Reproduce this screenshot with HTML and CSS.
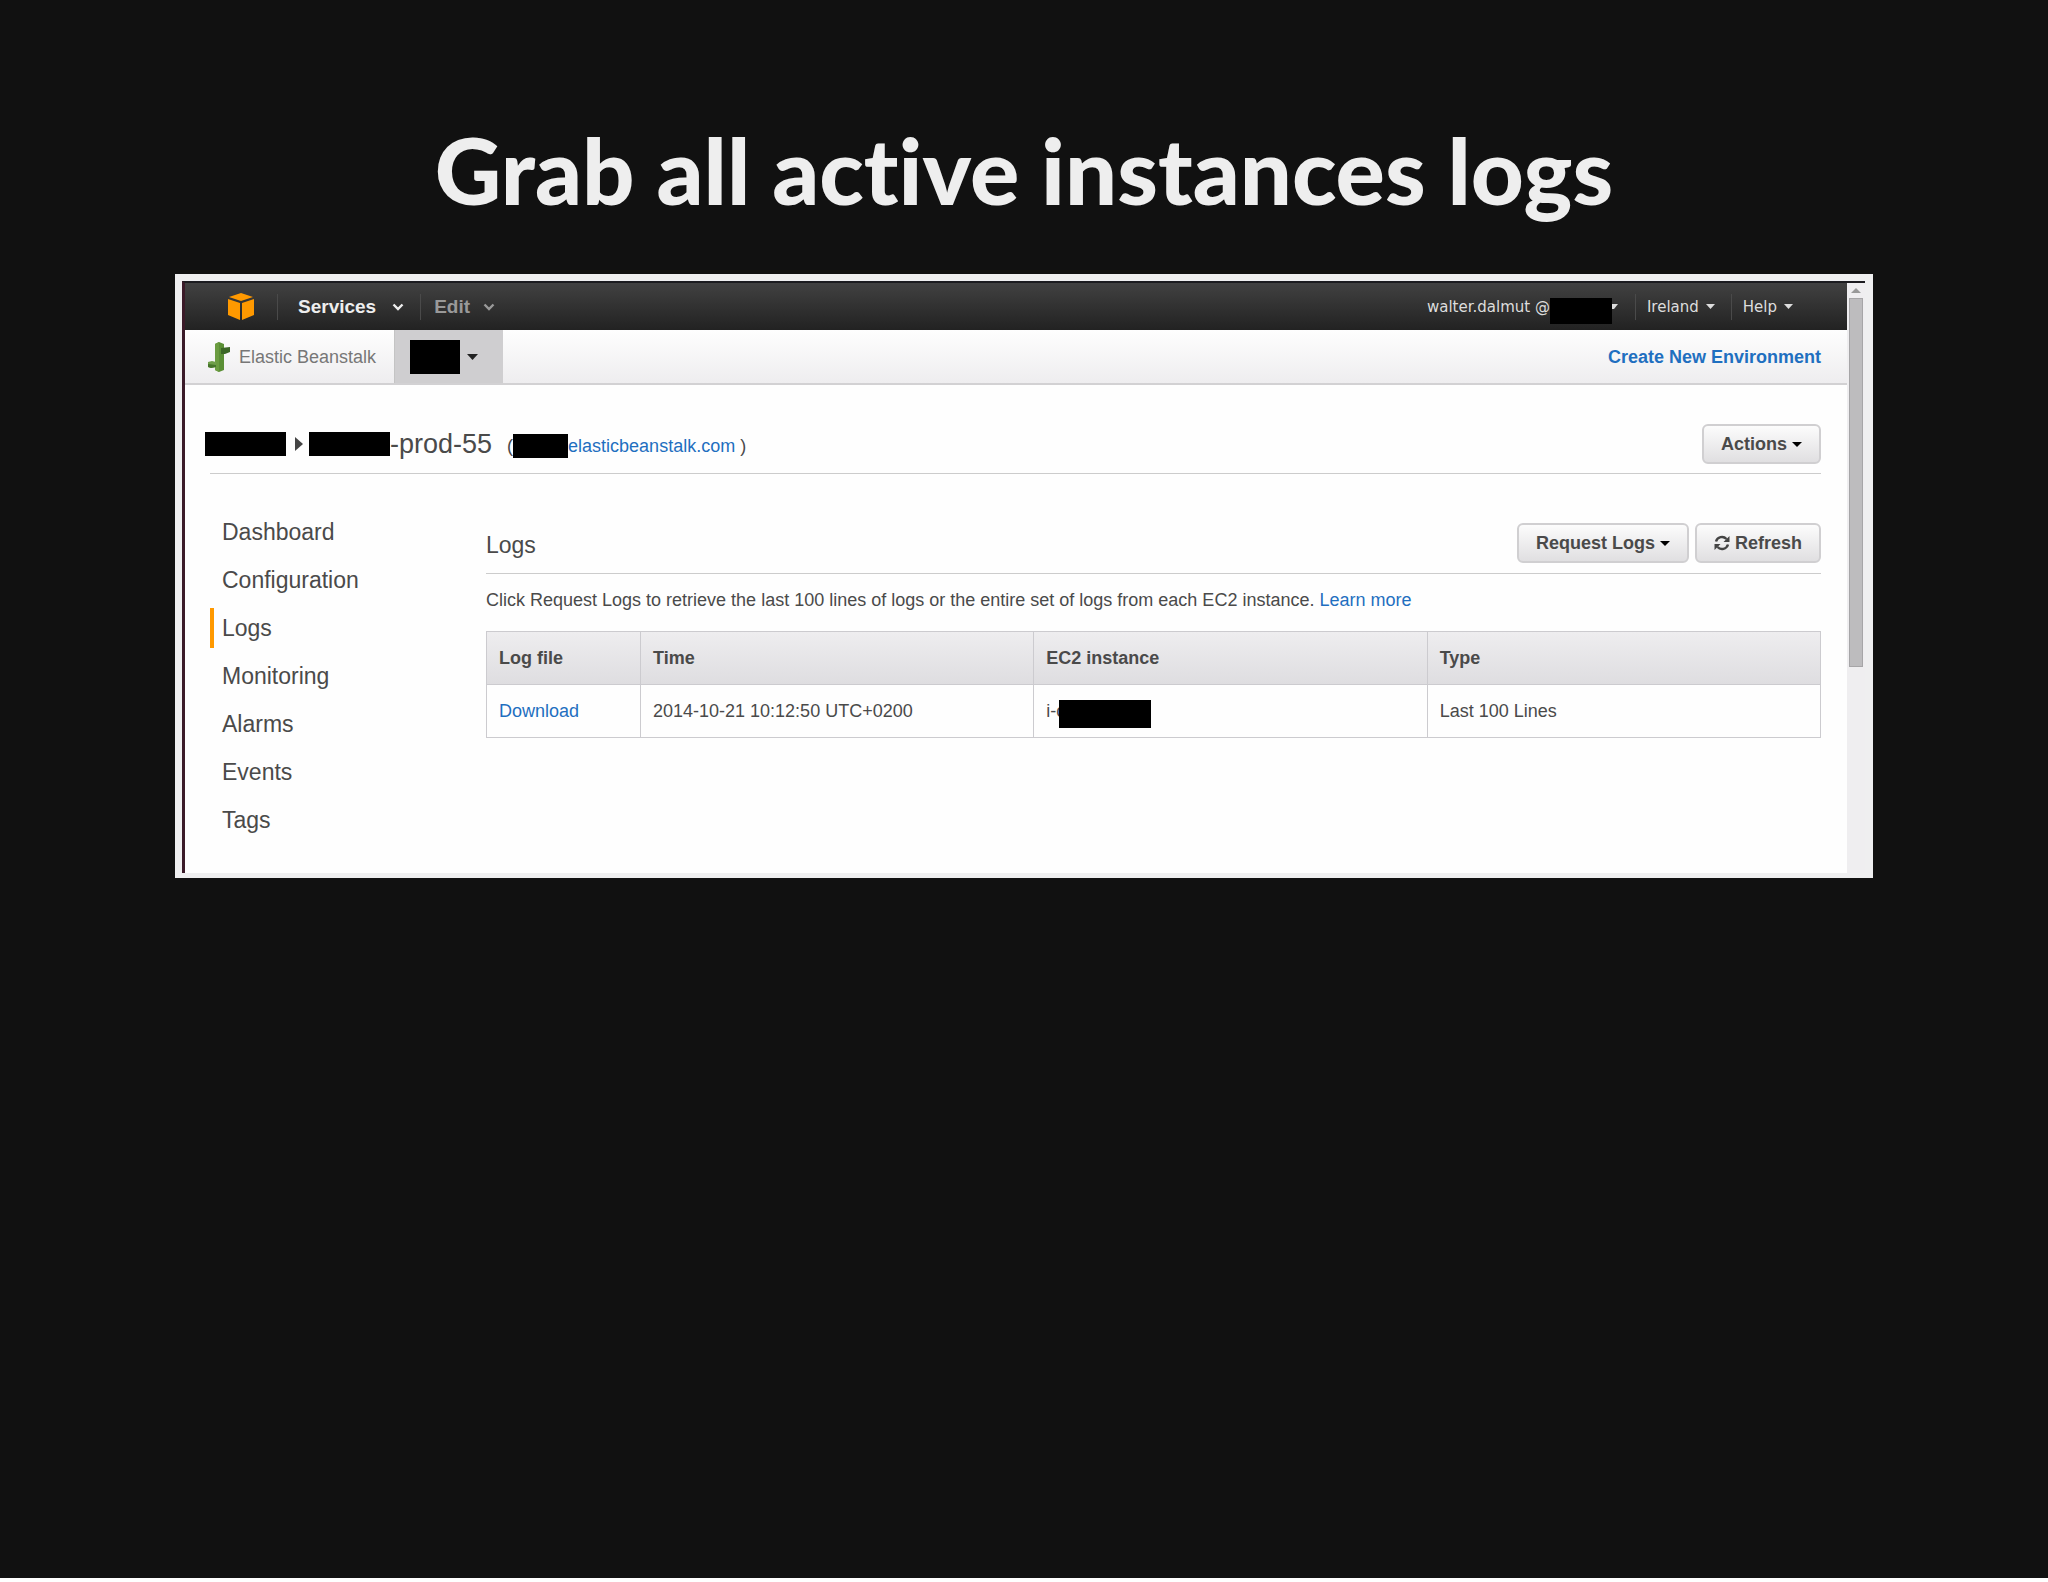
FILE: index.html
```html
<!DOCTYPE html>
<html lang="en">
<head>
<meta charset="utf-8">
<title>Grab all active instances logs</title>
<link rel="stylesheet" href="styles.css">
</head>
<body>
<main class="slide">
  <h1 class="slide-title">Grab all active instances logs</h1>
  <section class="frame" aria-label="Elastic Beanstalk console">
    <div class="console">
      <nav class="topbar">
        <a class="home" href="#" aria-label="Console home">
          <svg width="28" height="28" viewBox="0 0 28 28" fill="#f90"><path d="M14 0 26 4 14 8 2 4zM1 6l12 4v17L1 22zM27 6 15 10v17l12-5z"/></svg>
        </a>
        <button class="menu menu-services">Services <svg width="12" height="8" viewBox="0 0 12 8"><path d="M1.500 1.500 6 6l4.500-4.500" fill="none" stroke="currentColor" stroke-width="2.400"/></svg></button>
        <button class="menu menu-edit">Edit <svg width="12" height="8" viewBox="0 0 12 8"><path d="M1.500 1.500 6 6l4.500-4.500" fill="none" stroke="currentColor" stroke-width="2.400"/></svg></button>
        <div class="account">
          <button class="menu menu-user">walter.dalmut @<span class="redacted redacted-user"></span><svg width="6" height="6" viewBox="0 0 6 6"><path d="M0 0h6L2 5H0z" fill="currentColor"/></svg></button>
          <button class="menu menu-small">Ireland <svg width="9" height="6" viewBox="0 0 9 6"><path d="M0 0h9L4.500 5z" fill="currentColor"/></svg></button>
          <button class="menu menu-small">Help <svg width="9" height="6" viewBox="0 0 9 6"><path d="M0 0h9L4.500 5z" fill="currentColor"/></svg></button>
        </div>
      </nav>
      <div class="servicebar">
        <a class="service" href="#">
          <svg width="22" height="30" viewBox="0 0 22 30"><path d="M7 2l4-2 5 2v26l-5 2-4-2z" fill="#5a8f35"/><path d="M7 2l4-2v30l-4-2z" fill="#6b9c41"/><path d="M13 6l9-1v5l-5 2h-4z" fill="#3c6727"/><path d="M0 20l4-1 4 1v5l-5 1-3-1z" fill="#6f9f4a"/><path d="M0 22l8 1v2l-5 1-3-1z" fill="#46752b"/></svg>
          Elastic Beanstalk
        </a>
        <button class="app-tab" aria-label="Application"><span class="redacted redacted-app"></span><svg width="11" height="6" viewBox="0 0 11 6"><path d="M0 0h11L5.500 6z" fill="#222"/></svg></button>
        <a class="create" href="#">Create New Environment</a>
      </div>
      <div class="content">
        <header class="env-head">
          <h2 class="env-name"><span class="redacted redacted-name"></span><svg class="crumb" width="8" height="14" viewBox="0 0 8 14"><path d="M0 0l8 7-8 7z" fill="#444"/></svg><span class="redacted redacted-name"></span>-prod-55</h2>
          <p class="env-url">(<span class="redacted redacted-url"></span><a href="#">elasticbeanstalk.com</a> )</p>
          <button class="btn">Actions <svg width="10" height="5" viewBox="0 0 10 5"><path d="M0 0h10L5 5z"/></svg></button>
        </header>
        <div class="columns">
          <ul class="sidenav">
            <li><a href="#">Dashboard</a></li>
            <li><a href="#">Configuration</a></li>
            <li><a class="current" href="#">Logs</a></li>
            <li><a href="#">Monitoring</a></li>
            <li><a href="#">Alarms</a></li>
            <li><a href="#">Events</a></li>
            <li><a href="#">Tags</a></li>
          </ul>
          <section class="logs">
            <header class="logs-head">
              <h3>Logs</h3>
              <button class="btn">Request Logs <svg width="10" height="5" viewBox="0 0 10 5"><path d="M0 0h10L5 5z"/></svg></button>
              <button class="btn"><svg width="16" height="16" viewBox="0 0 16 16"><path d="M2 6.500A6.200 6.200 0 0 1 12.500 4M14 9.500A6.200 6.200 0 0 1 3.500 12" fill="none" stroke="#444" stroke-width="2.400"/><path d="M15.500 1v6h-6zM.5 15V9h6z" fill="#444"/></svg> Refresh</button>
            </header>
            <p class="hint">Click Request Logs to retrieve the last 100 lines of logs or the entire set of logs from each EC2 instance. <a href="#">Learn more</a></p>
            <table class="log-table">
              <colgroup><col class="col-file"><col><col><col></colgroup>
              <thead><tr><th>Log file</th><th>Time</th><th>EC2 instance</th><th>Type</th></tr></thead>
              <tbody><tr><td><a href="#">Download</a></td><td>2014-10-21 10:12:50 UTC+0200</td><td><span class="instance">i-c<span class="redacted redacted-id"></span></span></td><td>Last 100 Lines</td></tr></tbody>
            </table>
          </section>
        </div>
      </div>
    </div>
    <div class="scrollbar" aria-hidden="true">
      <svg class="scroll-up" width="10" height="5" viewBox="0 0 10 5"><path d="M0 5h10L5 0z" fill="#999"/></svg>
      <div class="thumb"></div>
    </div>
  </section>
</main>
</body>
</html>
```
FILE: styles.css
```css
* { box-sizing: border-box; }

body {
  margin: 0;
  background: #111;
  color: #4a4a4a;
  font: 18px/24px "Liberation Sans", Arial, sans-serif;
}

h1, h2, h3, p, ul { margin: 0; padding: 0; font-weight: normal; }
ul { list-style: none; }
a { color: #1f6fc0; text-decoration: none; }
button { font: inherit; color: inherit; margin: 0; padding: 0; border: 0; background: none; white-space: nowrap; }
svg { display: block; flex: none; }

.slide {
  min-height: 100vh;
  padding: 118px 175px 0;
  border-bottom: 4px solid #fff;
}

.slide-title {
  margin-bottom: 52px;
  color: #eee;
  font: 900 92px/104px Lato, "Open Sans", sans-serif;
  font-variant-ligatures: none;
  text-align: center;
}

.frame {
  display: flex;
  border: solid #efeff0;
  border-width: 7px 8px 5px 7px;
  background: #efeef0;
}

.console {
  flex: 1;
  min-width: 0;
  border-top: 2px solid #1c1c20;
  border-left: 3px solid #3a1a28;
  background: #fefefe;
}

.redacted { display: inline-block; flex: none; background: #000; }

/* Top navigation */
.topbar {
  display: flex;
  align-items: center;
  height: 47px;
  padding: 0 40px 0 42px;
  background: linear-gradient(#414141, #222);
  color: #eee;
}
.menu {
  display: flex;
  align-items: center;
  height: 26px;
  border-left: 1px solid #4a4a4a;
}
.home { margin-right: 22px; }
.menu-services, .menu-edit { font-size: 19px; font-weight: bold; }
.menu-services { gap: 16px; padding: 0 16px 0 20px; }
.menu-edit { gap: 13px; padding-left: 13px; color: #999; }
.account {
  display: flex;
  margin-left: auto;
  font: 15px/24px "DejaVu Sans", sans-serif;
  color: #ddd;
}
.menu-small { gap: 7px; padding: 0 16px 0 11px; }
.menu-small:last-child { padding-right: 14px; }
.menu-user { padding-right: 17px; border: 0; }
.redacted-user { width: 62px; height: 26px; margin-top: 8px; }

/* Service bar */
.servicebar {
  display: flex;
  height: 55px;
  padding-right: 26px;
  border-bottom: 2px solid #d2d1d3;
  background: linear-gradient(#fefefe, #eeedef);
}
.service {
  display: flex;
  align-items: center;
  gap: 9px;
  padding: 0 18px 0 23px;
  color: #777;
}
.app-tab {
  display: flex;
  align-items: center;
  gap: 7px;
  padding: 0 25px 0 15px;
  border-left: 1px solid #c4c4c4;
  background: #cfced0;
}
.redacted-app { width: 50px; height: 34px; }
.create { margin: auto 0 auto auto; font-weight: bold; }

/* Environment header */
.content { padding: 39px 26px 33px 25px; }
.env-head {
  display: flex;
  align-items: center;
  height: 50px;
  padding-bottom: 9px;
  border-bottom: 1px solid #ccc;
}
.env-name {
  display: flex;
  align-items: center;
  margin-left: -5px;
  font-size: 27px;
}
.redacted-name { width: 81px; height: 24px; }
.crumb { margin: 0 6px 0 9px; }
.env-url {
  display: flex;
  align-items: center;
  margin: 4px auto 0 15px;
  white-space: pre;
}
.redacted-url { width: 55px; height: 24px; }

.btn {
  display: flex;
  align-items: center;
  gap: 5px;
  height: 40px;
  padding: 0 17px;
  border: 2px solid #d0cfd1;
  border-radius: 6px;
  background: linear-gradient(#fcfcfc, #e0dfe1);
  font-weight: bold;
}

/* Two-column area */
.columns { display: flex; gap: 76px; margin-top: 38px; }
.sidenav {
  display: flex;
  flex-direction: column;
  gap: 8px;
  width: 200px;
}
.sidenav a {
  display: block;
  padding-left: 8px;
  border-left: 4px solid transparent;
  color: #4a4a4a;
  font-size: 23px;
  line-height: 40px;
}
.sidenav .current { border-color: #f90; }

.logs { flex: 1; min-width: 0; padding-top: 11px; }
.logs-head {
  display: flex;
  align-items: center;
  gap: 6px;
  padding-bottom: 10px;
  border-bottom: 1px solid #ccc;
}
.logs-head h3 { margin-right: auto; padding-top: 3px; font-size: 23px; }
.hint { margin: 14px 0 19px; }

.log-table {
  width: 100%;
  table-layout: fixed;
  border-collapse: collapse;
}
.col-file { width: 154px; }
.log-table th, .log-table td {
  height: 53px;
  padding: 0 12px;
  border: 1px solid #cccbcf;
  text-align: left;
}
.log-table thead tr { background: linear-gradient(#eeedef, #dedde0); }
.instance { display: flex; align-items: center; }
.redacted-id { width: 92px; height: 28px; margin: 6px 0 0 -6px; }

/* Scrollbar */
.scrollbar {
  width: 18px;
  border-top: 2px solid #1c1c20;
}
.scroll-up { margin: 5px auto; }
.thumb {
  height: 369px;
  margin: 0 2px;
  border: 1px solid #a6a5a7;
  background: #bdbcbe;
}
```
